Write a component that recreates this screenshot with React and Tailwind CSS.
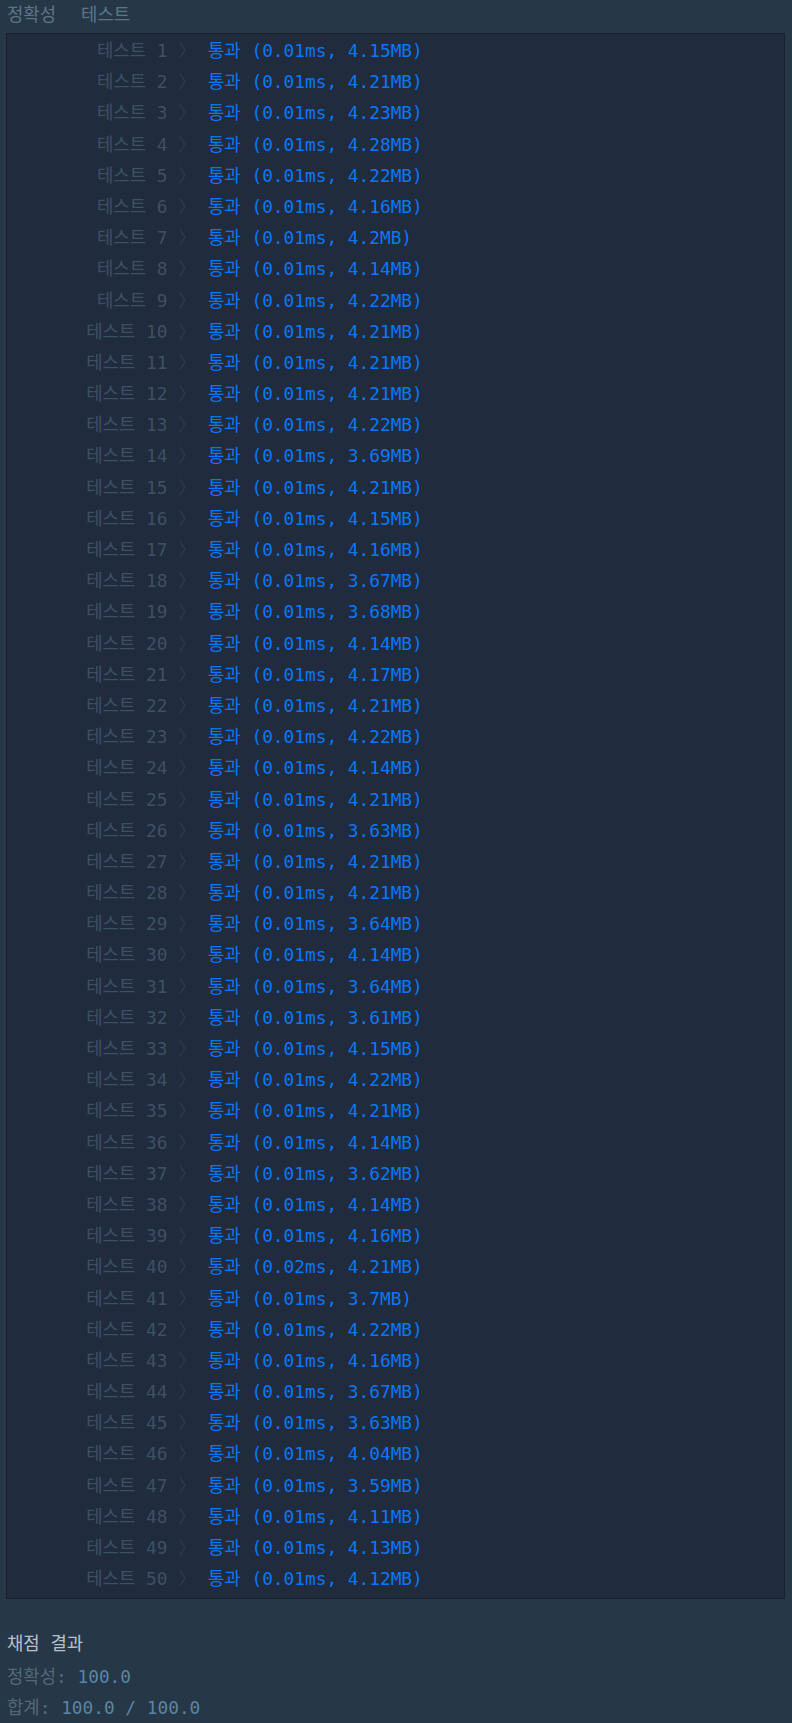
const results = [
  ["0.01", "4.15"], ["0.01", "4.21"], ["0.01", "4.23"], ["0.01", "4.28"], ["0.01", "4.22"],
  ["0.01", "4.16"], ["0.01", "4.2"], ["0.01", "4.14"], ["0.01", "4.22"], ["0.01", "4.21"],
  ["0.01", "4.21"], ["0.01", "4.21"], ["0.01", "4.22"], ["0.01", "3.69"], ["0.01", "4.21"],
  ["0.01", "4.15"], ["0.01", "4.16"], ["0.01", "3.67"], ["0.01", "3.68"], ["0.01", "4.14"],
  ["0.01", "4.17"], ["0.01", "4.21"], ["0.01", "4.22"], ["0.01", "4.14"], ["0.01", "4.21"],
  ["0.01", "3.63"], ["0.01", "4.21"], ["0.01", "4.21"], ["0.01", "3.64"], ["0.01", "4.14"],
  ["0.01", "3.64"], ["0.01", "3.61"], ["0.01", "4.15"], ["0.01", "4.22"], ["0.01", "4.21"],
  ["0.01", "4.14"], ["0.01", "3.62"], ["0.01", "4.14"], ["0.01", "4.16"], ["0.02", "4.21"],
  ["0.01", "3.7"], ["0.01", "4.22"], ["0.01", "4.16"], ["0.01", "3.67"], ["0.01", "3.63"],
  ["0.01", "4.04"], ["0.01", "3.59"], ["0.01", "4.11"], ["0.01", "4.13"], ["0.01", "4.12"],
];

const mono = "font-['DejaVu_Sans_Mono','Noto_Sans_CJK_KR',monospace]";

function ResultRow({ n, time, mem }) {
  return (
    <div className="flex h-[31.2px] items-center leading-[31.2px] whitespace-pre">
      <div className="w-[189px] shrink-0 text-right text-[#3f5065]">
        테스트 {n} <span className="text-[#2e3c4e]">〉</span>
      </div>
      <div className="ml-[12px] text-[#0a78f5]">
        통과 ({time}ms, {mem}MB)
      </div>
    </div>
  );
}

export default function App() {
  return (
    <div className={`${mono} min-h-[1723px] bg-[#263747] text-[17.8px]`}>
      {/* header */}
      <div className="h-[33px] pl-[7px] leading-[30px] text-[#5c7687]">
        정확성<span className="ml-[25px]">테스트</span>
      </div>

      {/* test results */}
      <div className="mr-[7px] ml-[6px] border border-[#18222f] bg-[#202b3d] pt-[1px] pb-[4px]">
        {results.map(([time, mem], i) => (
          <ResultRow key={i} n={i + 1} time={time} mem={mem} />
        ))}
      </div>

      {/* summary */}
      <div className="mt-[29px] pl-[7px] whitespace-pre">
        <div className="leading-[31px] text-[#b8c2cc]">채점 결과</div>
        <div className="mt-[2px] leading-[31px] text-[#53697b]">
          정확성: <span className="text-[#5886a5]">100.0</span>
        </div>
        <div className="leading-[31px] text-[#53697b]">
          합계: <span className="text-[#5886a5]">100.0 / 100.0</span>
        </div>
      </div>
    </div>
  );
}
